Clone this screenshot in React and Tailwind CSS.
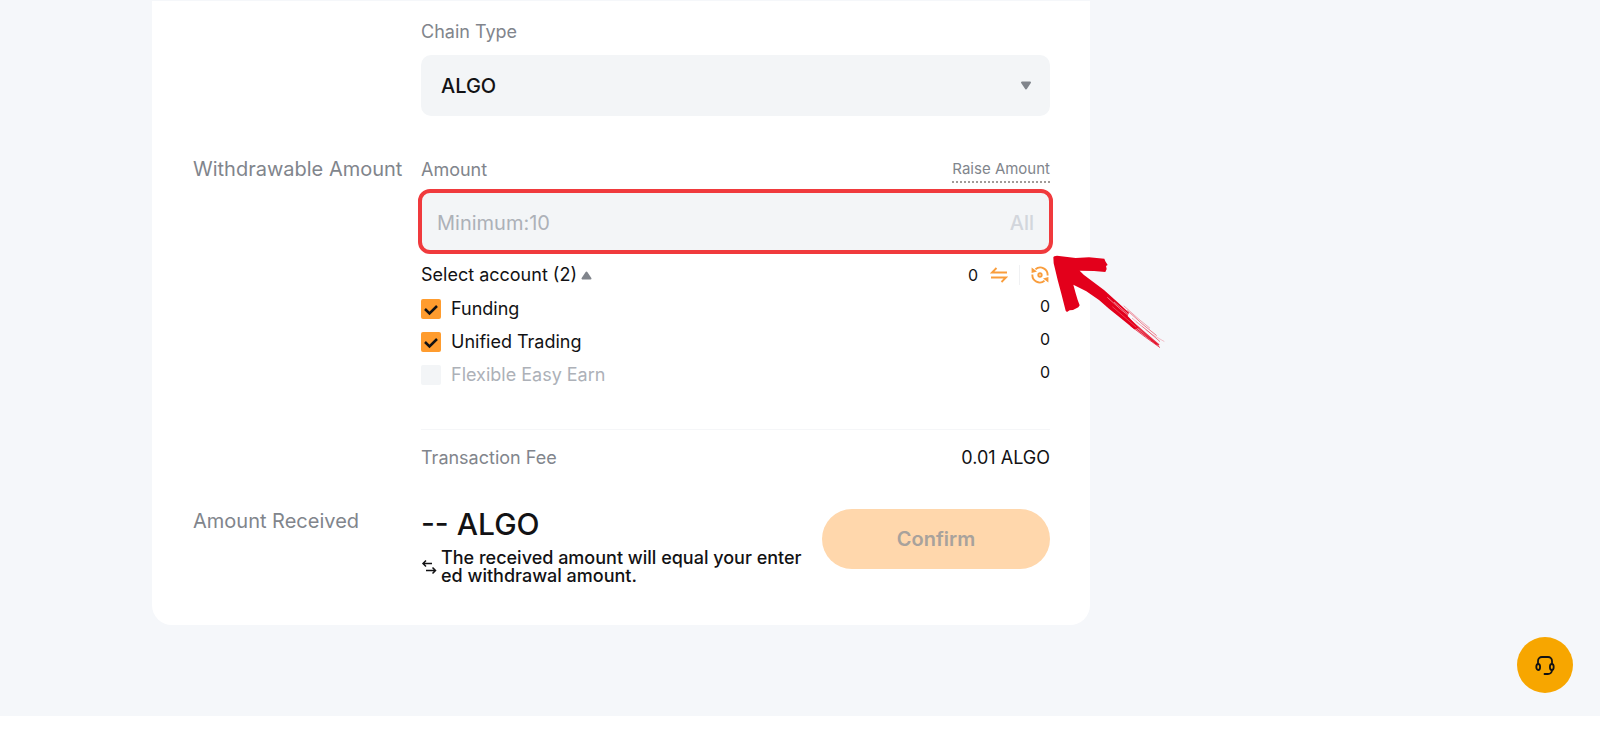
import React, { useState } from 'react';

const accountList = [
  { id: 'funding', name: 'Funding', balance: '0' },
  { id: 'unified', name: 'Unified Trading', balance: '0' },
  { id: 'flexible', name: 'Flexible Easy Earn', balance: '0', disabled: true },
];

function BrushArrow() {
  return (
    <svg className="absolute left-full top-full w-[120px] h-[100px] pointer-events-none" viewBox="0 0 360 300" aria-hidden="true">
      <path
        d="M13 22Q14 17 24 17L80 24L120 22L166 26L169 34L176 45L171 48L173 57L169 66L135 63L92 62L104 74L130 94L165 120L205 156L240 188L236 198L256 220L269 234L256 238L222 210L180 176L150 150L112 124L73 104L80 130L86 150L92 166L88 172L72 180L62 181L54 186L50 182L38 135L26 90L14 40Z"
        fill="#e3001b"
      />
      <g fill="none" stroke="#e3001b" strokeLinecap="round">
        <path d="M235 204L290 252L328 284" strokeWidth="6" opacity="0.8" />
        <path d="M215 197L270 242L322 282" strokeWidth="4" opacity="0.85" />
        <path d="M245 228L290 262L332 292" strokeWidth="3" opacity="0.7" />
        <path d="M236 182L280 222L322 256" strokeWidth="3" opacity="0.5" />
        <path d="M225 168L270 208L302 234" strokeWidth="2" opacity="0.5" />
        <path d="M262 216L310 254L345 274" strokeWidth="2" opacity="0.35" />
        <path d="M250 205L300 246L332 274" strokeWidth="3" opacity="0.5" />
      </g>
      <g fill="none" stroke="#ffffff" strokeWidth="2" opacity="0.75">
        <path d="M175 142L215 178L255 210L290 240" />
        <path d="M195 156L235 190L280 228" />
        <path d="M190 170L225 200L262 232" strokeWidth="1" />
      </g>
    </svg>
  );
}

function App() {
  const [chain, setChain] = useState('ALGO');
  const [amount, setAmount] = useState('');
  const [open, setOpen] = useState(true);
  const [selected, setSelected] = useState(['funding', 'unified']);

  const toggleAccount = (id) => {
    if (selected.includes(id)) {
      setSelected(selected.filter((item) => item !== id));
    } else {
      setSelected([...selected, id]);
    }
  };

  return (
    <div className="bg-[#f5f7fa] pt-px pb-[91px] font-['Inter',sans-serif] text-[#121214]">
      <main className="ml-[9.5%] max-w-[938px] bg-white rounded-b-[20px] pl-[41px] pr-10 pt-[17px] pb-10">
        {/* Chain type */}
        <section className="grid grid-cols-[228px_1fr]">
          <div className="col-start-2">
            <label htmlFor="chain" className="block text-lg leading-7 text-[#81858c]">Chain Type</label>
            <div className="relative mt-[9px]">
              <select
                id="chain"
                value={chain}
                onChange={(e) => setChain(e.target.value)}
                className="block w-full h-[61px] appearance-none rounded-[10px] bg-[#f3f5f7] px-5 text-xl font-medium outline-none"
              >
                <option value="ALGO">ALGO</option>
              </select>
              <svg className="absolute right-[18px] top-[26px] w-[12px] h-[9px] pointer-events-none" viewBox="0 0 12 9" aria-hidden="true">
                <path d="M2 1.500h8L6 7.500z" fill="#81858c" stroke="#81858c" strokeWidth="2" strokeLinejoin="round" />
              </svg>
            </div>
          </div>
        </section>

        {/* Amount and source accounts */}
        <section className="grid grid-cols-[228px_1fr] mt-[39px]">
          <h2 className="text-xl leading-7 text-[#81858c] whitespace-nowrap">Withdrawable Amount</h2>
          <div>
            <div className="flex items-center justify-between text-[#81858c]">
              <label htmlFor="amount" className="text-lg leading-[30px]">Amount</label>
              <a href="#raise" className="text-[15px] leading-6 border-b-2 border-dotted border-[#a09b98]">Raise Amount</a>
            </div>
            <div className="relative -mx-[3px] mt-1 flex items-center rounded-xl border-4 border-[#f03a3d] bg-[#f3f5f7] px-[15px]">
              <input
                id="amount"
                type="text"
                value={amount}
                onChange={(e) => setAmount(e.target.value)}
                placeholder="Minimum:10"
                className="flex-1 min-w-0 h-[57px] pt-[3px] bg-transparent text-xl outline-none placeholder:text-[#adb1b8]"
              />
              <button type="button" className="pt-[3px] text-xl font-medium text-[#d2d6dc]">All</button>
              <BrushArrow />
            </div>

            <div className="mt-[7px] flex items-center justify-between">
              <button type="button" onClick={() => setOpen(!open)} className="flex items-center gap-1 text-lg leading-7">
                Select account ({selected.length})
                <svg className="w-[11px] h-[9px]" viewBox="0 0 11 9" aria-hidden="true">
                  <path d="M1.500 7.500h8L5.500 1.500z" fill="#81858c" stroke="#81858c" strokeWidth="2" strokeLinejoin="round" />
                </svg>
              </button>
              <div className="flex items-center pr-px">
                <span className="text-base">0</span>
                <button type="button" aria-label="Transfer" className="ml-3">
                  <svg className="w-[18px] h-[18px]" viewBox="0 0 18 18" fill="none" stroke="#f99d3c" strokeWidth="1.900" aria-hidden="true">
                    <path d="M17 6.500H2L6.500 2M1 11.500h15L11.500 16" />
                  </svg>
                </button>
                <span className="ml-[11px] w-px h-5 bg-[#f0f1f3]" />
                <button type="button" aria-label="Convert" className="ml-[11px]">
                  <svg className="w-[18px] h-[18px]" viewBox="0 0 18 18" fill="none" stroke="#f99d3c" strokeWidth="1.900" aria-hidden="true">
                    <path d="M4.500 3.200A7.400 7.400 0 0 1 16.600 9.500M1.400 8.500A7.400 7.400 0 0 0 13.500 14.800" />
                    <path d="M.6 1.500V7L6 5.500zM17.400 16.500V11L12 12.500z" fill="#f99d3c" stroke="none" />
                    <circle cx="9" cy="9" r="1.700" />
                  </svg>
                </button>
              </div>
            </div>

            {open && (
              <ul className="mt-[6px]">
                {accountList.map((item) => (
                  <li key={item.id} className="flex items-start justify-between h-[33px]">
                    <label className={item.disabled ? 'flex items-center gap-[10px] text-lg leading-7 text-[#adb1b8]' : 'flex items-center gap-[10px] text-lg leading-7'}>
                      <span className="relative block size-5">
                        <input
                          type="checkbox"
                          disabled={item.disabled}
                          checked={selected.includes(item.id)}
                          onChange={() => toggleAccount(item.id)}
                          className="block size-5 appearance-none rounded-xs bg-[#f3f5f7] checked:bg-[#ff9c2e]"
                        />
                        {selected.includes(item.id) && (
                          <svg className="absolute inset-0 size-5 pointer-events-none" viewBox="0 0 20 20" fill="none" stroke="#121214" strokeWidth="2.500" aria-hidden="true">
                            <path d="M4 10l4.500 4.500L16 7" />
                          </svg>
                        )}
                      </span>
                      {item.name}
                    </label>
                    <span className="text-base leading-[22px]">{item.balance}</span>
                  </li>
                ))}
              </ul>
            )}

            <div className="mt-[35px] pt-[14px] flex items-center justify-between border-t border-[#f5f6f8] text-lg leading-7">
              <span className="text-[#81858c]">Transaction Fee</span>
              <span>0.01 ALGO</span>
            </div>
          </div>
        </section>

        {/* Result */}
        <section className="grid grid-cols-[228px_1fr] mt-[35px]">
          <h2 className="text-xl leading-7 text-[#81858c]">Amount Received</h2>
          <div className="flex items-start justify-between">
            <div>
              <p className="text-[30px] leading-[34px] font-medium">-- ALGO</p>
              <div className="mt-2 flex items-center gap-1">
                <svg className="w-4 h-4 shrink-0" viewBox="0 0 16 16" fill="none" stroke="#121214" strokeWidth="1.500" aria-hidden="true">
                  <path d="M11 4.500H2M5 1.500l-3 3 3 3M5 11.500h9.500M11.500 8.500l3 3-3 3" />
                </svg>
                <p className="text-lg leading-[18px] font-medium">The received amount will equal your enter<br />ed withdrawal amount.</p>
              </div>
            </div>
            <button type="button" disabled className="mt-[2px] w-[228px] h-[60px] rounded-full bg-[#ffd7ac] text-xl font-semibold text-[#a8a29c]">Confirm</button>
          </div>
        </section>
      </main>

      <button type="button" aria-label="Support" className="fixed right-[27px] bottom-9 size-14 rounded-full bg-[#f7a600] flex items-center justify-center">
        <svg className="size-5" viewBox="0 0 20 20" fill="none" stroke="#121214" strokeWidth="1.800" strokeLinecap="round" aria-hidden="true">
          <path d="M3 9V6a4 4 0 0 1 4-4h6a4 4 0 0 1 4 4v3M17 15a4 4 0 0 1-4 4H9.500" />
          <ellipse cx="3.200" cy="12" rx="1.900" ry="3" />
          <ellipse cx="16.800" cy="12" rx="1.900" ry="3" />
        </svg>
      </button>
    </div>
  );
}

export default App;
